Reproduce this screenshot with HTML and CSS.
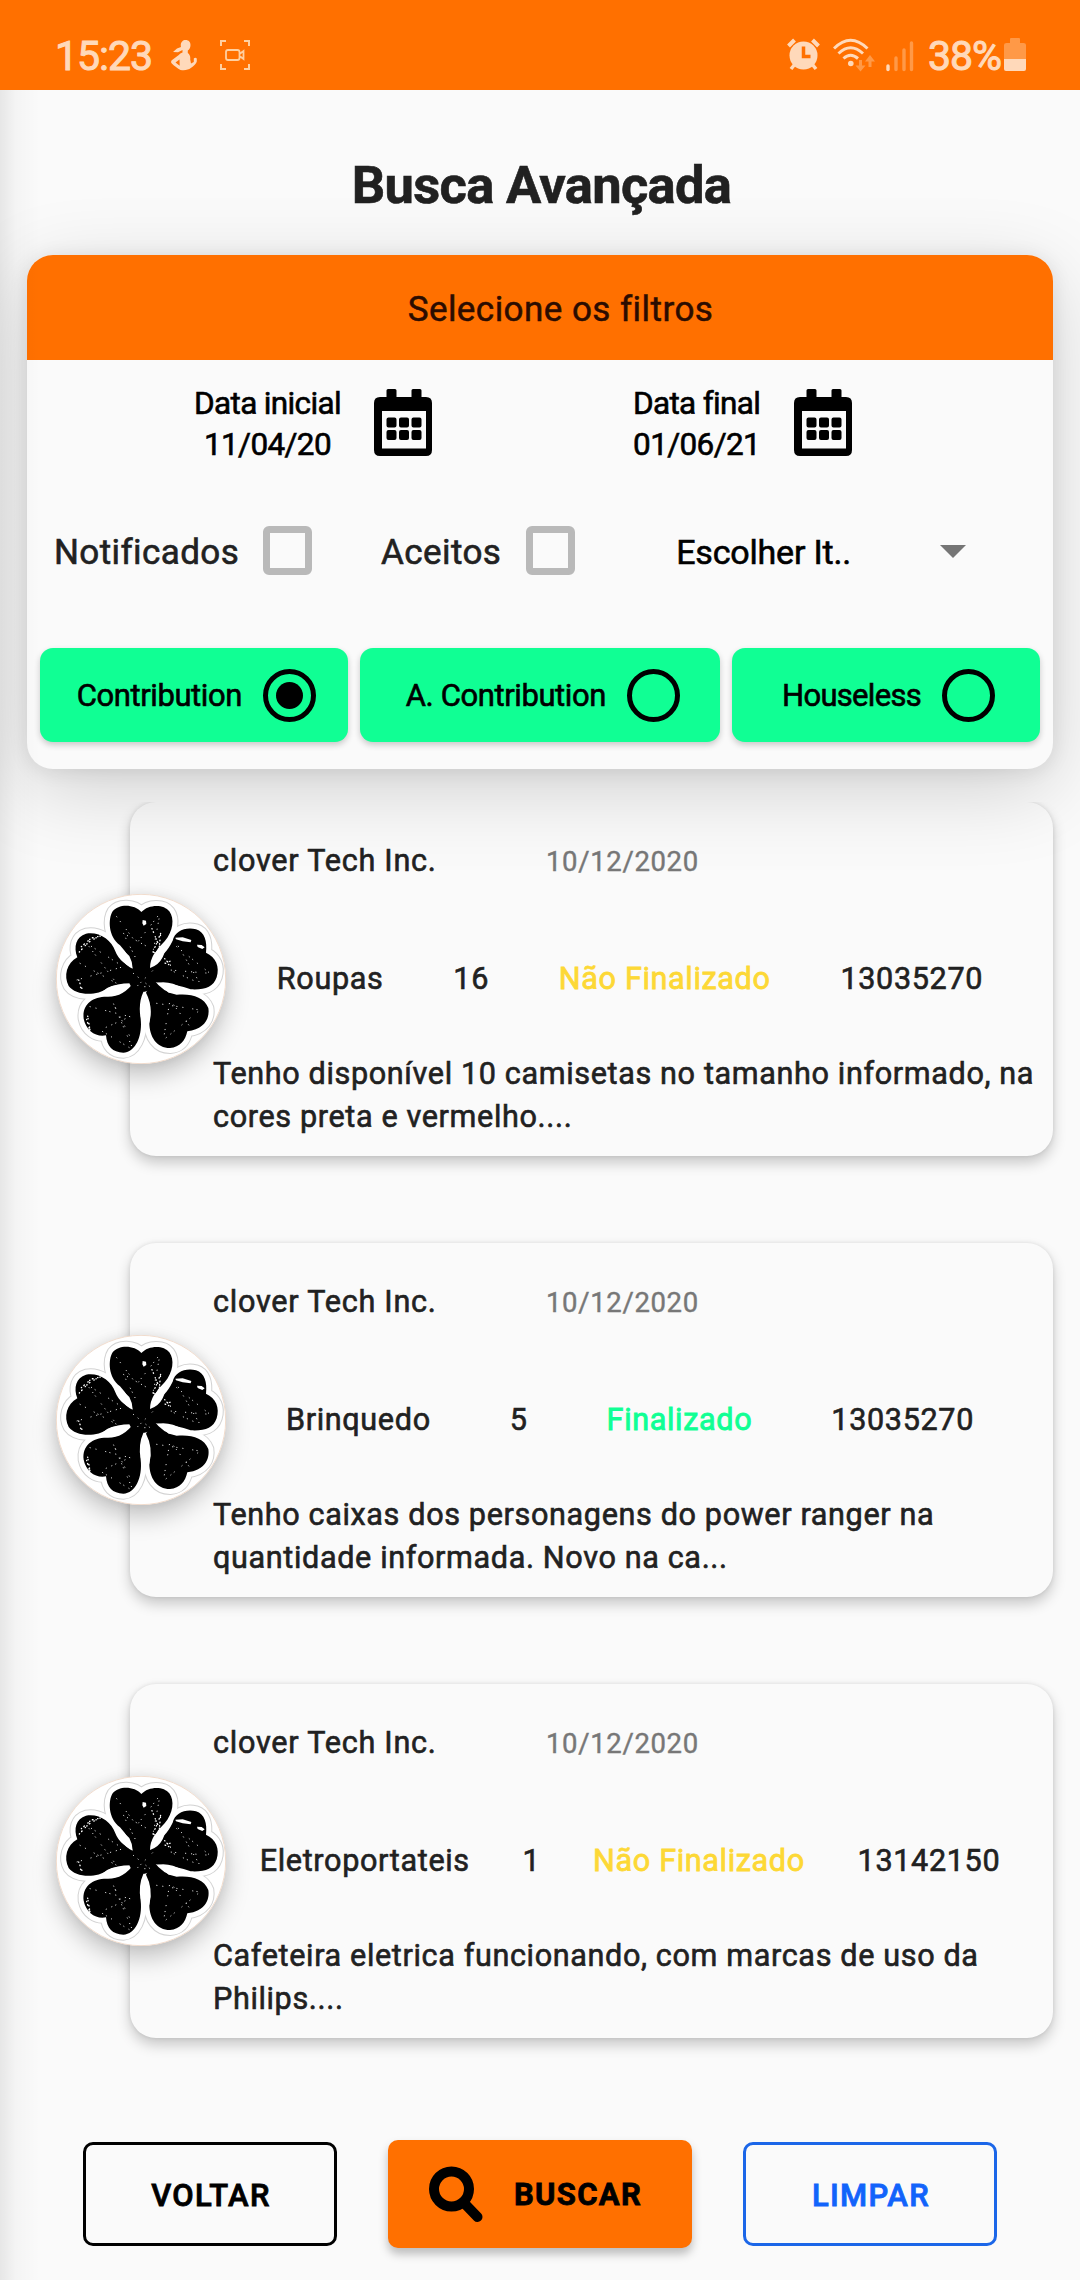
FILE: index.html
```
<!DOCTYPE html>
<html lang="pt-BR">
<head>
<meta charset="utf-8">
<title>Busca Avançada</title>
<link rel="stylesheet" href="styles.css">
</head>
<body>
<svg class="defs" aria-hidden="true">
  <defs>
    <g id="petals">
      <path d="M278 300Q274 262 240 226C204 200 204 146 218 124C236 100 284 102 304 126C326 102 372 102 388 124C404 146 400 184 374 214Q334 250 330 300Z"/>
      <path d="M324 292Q344 266 374 248Q386 236 398 212C404 184 436 170 468 178C494 186 502 214 498 248C528 262 540 290 530 322C520 352 494 360 452 358Q410 342 340 336Z"/>
      <path d="M340 328Q372 370 410 374C454 370 492 380 505 414C510 444 494 478 442 484C436 512 420 532 390 534C350 534 328 500 328 458Q340 410 318 368Z"/>
      <path d="M310 366Q294 400 302 446C308 500 286 546 250 548C218 548 200 528 198 496C168 502 138 482 131 446C126 404 156 380 200 380Q250 382 282 336Z"/>
      <path d="M284 340Q232 338 204 354C168 380 106 376 86 348C70 318 80 280 112 262C100 230 108 200 138 191C176 184 214 208 226 244Q240 282 296 302Z"/>
      <circle cx="306" cy="326" r="40"/>
    </g>
    <symbol id="clover" viewBox="48 72 510 510">
      <circle cx="303" cy="327" r="254" fill="#fff" stroke="#f1dccd" stroke-width="3"/>
      <use href="#petals" fill="#d2d2d2" stroke="#d2d2d2" stroke-width="36" stroke-linejoin="round"/>
      <use href="#petals" fill="#fff" stroke="#fff" stroke-width="30" stroke-linejoin="round"/>
      <use href="#petals" fill="#000"/>
      <g fill="#fff">
        <path d="M222 216Q252 242 268 258Q278 276 278 296Q254 286 240 258ZM386 218Q352 238 342 252Q330 272 330 294Q356 286 368 262ZM190 362Q214 340 268 344Q246 364 232 374Q206 382 190 362ZM354 338Q392 332 428 356Q424 370 386 368ZM315 370Q304 400 302 438L314 492L328 458Q338 404 315 370Z"/>
        <path d="M406 203l22-1 26 8-2 7-24-3-20-6zM471 224l14 1 9 7-7 5-14-6zM308 150l10 2 1 10-8 5-4-7z"/>
      </g>
      <g fill="none" stroke="#fff" stroke-linecap="round">
        <path stroke-width="4" stroke-dasharray="1 9 2 14 1 6" d="M336 176l22 54 4-40-24 58 22-4M118 246l26-28 30-18M124 230l30-26 28-6M374 266l18 20-20-8 26-6M140 448l12 44-10-60M116 330l10 26-8-8"/>
        <path stroke-width="2.600" stroke-dasharray="1 17 1 29 1 12" d="M230 140l60 80 70-90-20 110-90-50 40 80M120 280l110 60-90-120 110 70-140 40M410 230l100 80-120-10 90 40-70-120M350 400l130 20-110 90 20-120 60 80M150 410l120 30-90 40 100 60-60-140 50 100M280 310l50 40-40 0 50-50"/>
      </g>
    </symbol>
    <symbol id="calendar" viewBox="0 0 58 67">
      <path fill-rule="evenodd" d="M12.5 8V1.5q0-1.5 1.5-1.5h7q1.500 0 1.500 1.500V8h15V1.500q0-1.500 1.500-1.500h7q1.500 0 1.500 1.500V8H52q6 0 6 6v47q0 6-6 6H6q-6 0-6-6V14q0-6 6-6zM8 22v37.500h44V22z"/>
      <path d="M14.500 28.500h6q2 0 2 2v6q0 2-2 2h-6q-2 0-2-2v-6q0-2 2-2zm12.500 0h6q2 0 2 2v6q0 2-2 2h-6q-2 0-2-2v-6q0-2 2-2zm12.500 0h6q2 0 2 2v6q0 2-2 2h-6q-2 0-2-2v-6q0-2 2-2zm-25 12.500h6q2 0 2 2v6q0 2-2 2h-6q-2 0-2-2v-6q0-2 2-2zm12.500 0h6q2 0 2 2v6q0 2-2 2h-6q-2 0-2-2v-6q0-2 2-2zm12.500 0h6q2 0 2 2v6q0 2-2 2h-6q-2 0-2-2v-6q0-2 2-2z"/>
    </symbol>
  </defs>
</svg>

<header class="status">
  <span class="status-text clock">15:23</span>
  <svg class="i-person" width="27" height="31" viewBox="0 0 27 31" fill="#ffd9ba"><path d="M14.500 0c3.400 0 5 2.300 5 5 0 2.800-1.300 4.600-2.700 5.600v2.400c2 1.500 2.800 3.700 2.400 6.200l.8 4.300 2.800-1.600V18.600q1.500-1.500 3 0v3c-.3 2-3 4.400-6 6.500C17.500 30 14 30.500 9.500 30 6 28 3 26 .8 23.600c-1.200-1.500-.8-2.600.3-3.500l6.700-5c1-1.300 2-2.200 3.700-2.700V10L7 12.200l-5-.3L6 8.500 10 7C9 2.800 11.500 0 14.500 0zM8.500 19.500l-4 3 4.200 3.200z"/></svg>
  <svg class="i-capture" width="30" height="30" viewBox="0 0 30 30" fill="none" stroke="#ffd0a0" stroke-width="2"><path d="M1 6V1h5M24 1h5v5M29 24v5h-5M6 29H1v-5"/><path d="M8 10h9.500q2 0 2 2v6q0 2-2 2H8q-2 0-2-2v-6q0-2 2-2zM19.500 14l4-3v8l-4-3z" stroke-width="1.800"/></svg>
  <svg class="i-alarm" width="33" height="33" viewBox="0 0 33 33"><path d="M1.500 8L7.500 2M25.500 2l6 6" stroke="#ffd9ba" stroke-width="4"/><path d="M8 26l-4 5M25 26l4 5" stroke="#ffd9ba" stroke-width="3.500"/><circle cx="16.500" cy="17.500" r="14" fill="#ffd9ba"/><path d="M16.500 8.500v10h7" fill="none" stroke="#ff7000" stroke-width="3.500"/></svg>
  <svg class="i-wifi" width="43" height="34" viewBox="0 0 43 34" fill="none" stroke="#ffd9ba" stroke-width="3"><path d="M1 10.500Q17.500-6 34.500 10.500M5.500 15.500Q17.500 4 30 15.500M10.500 20.500Q17.500 14 25 20.500"/><circle cx="17.800" cy="25.500" r="2.800" fill="#ffd9ba" stroke="none"/><path d="M27.500 22v8M37 29V21" stroke="#ff9947"/><path d="M22.500 27.500h10l-5 6zM32 23.500h10l-5-6.500z" fill="#ff9947" stroke="none"/></svg>
  <svg class="i-signal" width="28" height="32" viewBox="0 0 28 32" stroke-width="3.400" stroke-linecap="round" stroke="#ff9947"><path stroke="#ffd9ba" d="M2 26v3.500"/><path d="M10 18v11.500M18 10v19.500M25.500 3v26.500"/></svg>
  <span class="status-text percent">38%</span>
  <svg class="i-battery" width="22" height="34" viewBox="0 0 22 34"><path fill="#ff9947" d="M6 1q0-1 1-1h8q1 0 1 1v4h3.500Q22 5 22 7v14H0V7q0-2 2.500-2H6z"/><path fill="#ffd9ba" d="M0 21h22v10q0 2-2 2H2q-2 0-2-2z"/></svg>
</header>

<main class="screen">
  <h1 class="title">Busca Avançada</h1>

  <section class="filters">
    <h2 class="filters-head">Selecione os filtros</h2>
    <div class="dates">
      <div class="date date-start"><span>Data inicial<br>11/04/20</span><svg width="58" height="67"><use href="#calendar"/></svg></div>
      <div class="date date-end"><span>Data final<br>01/06/21</span><svg width="58" height="67"><use href="#calendar"/></svg></div>
    </div>
    <div class="options">
      <label class="check check-notified">Notificados<i class="box"></i></label>
      <label class="check check-accepted">Aceitos<i class="box"></i></label>
      <div class="select">Escolher It..<i class="caret"></i></div>
    </div>
    <div class="kinds">
      <button class="kind kind-side"><span>Contribution</span><i class="radio radio-on"></i></button>
      <button class="kind kind-mid"><span>A. Contribution</span><i class="radio"></i></button>
      <button class="kind kind-last"><span>Houseless</span><i class="radio"></i></button>
    </div>
  </section>

  <section class="results">
    <article class="item">
      <div class="avatar"><svg viewBox="0 0 170 170"><use href="#clover"/></svg></div>
      <div class="card">
        <div class="top"><span class="name">clover Tech Inc.</span><time class="when">10/12/2020</time></div>
        <div class="facts"><span>Roupas</span><span>16</span><span class="pending">Não Finalizado</span><span>13035270</span></div>
        <p class="desc">Tenho disponível 10 camisetas no tamanho informado, na<br>cores preta e vermelho....</p>
      </div>
    </article>
    <article class="item">
      <div class="avatar"><svg viewBox="0 0 170 170"><use href="#clover"/></svg></div>
      <div class="card">
        <div class="top"><span class="name">clover Tech Inc.</span><time class="when">10/12/2020</time></div>
        <div class="facts"><span>Brinquedo</span><span>5</span><span class="done">Finalizado</span><span>13035270</span></div>
        <p class="desc">Tenho caixas dos personagens do power ranger na<br>quantidade informada. Novo na ca...</p>
      </div>
    </article>
    <article class="item">
      <div class="avatar"><svg viewBox="0 0 170 170"><use href="#clover"/></svg></div>
      <div class="card">
        <div class="top"><span class="name">clover Tech Inc.</span><time class="when">10/12/2020</time></div>
        <div class="facts"><span>Eletroportateis</span><span>1</span><span class="pending">Não Finalizado</span><span>13142150</span></div>
        <p class="desc">Cafeteira eletrica funcionando, com marcas de uso da<br>Philips....</p>
      </div>
    </article>
  </section>

  <nav class="actions">
    <button class="btn btn-back">VOLTAR</button>
    <button class="btn btn-search"><svg width="54" height="57" viewBox="0 0 54 57" fill="none" stroke="#000"><circle cx="22.500" cy="23" r="17.500" stroke-width="10"/><path d="M36 38l12.500 13" stroke-width="10" stroke-linecap="round"/></svg>BUSCAR</button>
    <button class="btn btn-clear">LIMPAR</button>
  </nav>
</main>
</body>
</html>
```
FILE: styles.css
```
* { box-sizing: border-box; }

body {
  margin: 0;
  width: 1080px;
  height: 2280px;
  overflow: hidden;
  background: #fafafa;
  color: #212121;
  font-family: Roboto, sans-serif;
  -webkit-text-stroke: 0.6px currentColor;
}

h1, h2, p { margin: 0; font-weight: 400; }
i { display: block; flex: none; }
svg { display: block; flex: none; }
button { padding: 0; border: 0; font: inherit; letter-spacing: inherit; color: #000; background: none; -webkit-text-stroke: inherit; }
.defs { position: absolute; width: 0; height: 0; }

/* Status bar */
.status {
  display: flex;
  align-items: flex-start;
  height: 90px;
  padding: 38px 54px 0 54px;
  background: #ff7000;
  color: #ffd9ba;
}
.status-text { font-size: 41px; line-height: 36px; letter-spacing: -1px; -webkit-text-stroke: 1px #ffd9ba; }
.clock { width: 116px; margin-left: 1px; }
.i-person { margin-top: 2px; }
.i-capture { margin: 2px 0 0 22px; }
.i-alarm { margin-left: auto; }
.i-wifi { margin-left: 13px; }
.i-signal { margin: 2px 0 0 10px; }
.percent { width: 76px; margin-left: 14px; }

/* Screen */
.screen { position: relative; height: 2190px; }
.screen::before {
  content: "";
  position: absolute;
  inset: 0 auto 0 0;
  width: 40px;
  z-index: 3;
  background: linear-gradient(90deg, rgba(0,0,0,.08), rgba(0,0,0,.025) 40%, transparent);
  pointer-events: none;
}
.title {
  height: 165px;
  padding: 65px 0 0 3px;
  text-align: center;
  font-size: 52.5px;
  font-weight: 700;
  line-height: 60px;
  letter-spacing: -0.7px;
}

/* Filter panel */
.filters {
  position: relative;
  z-index: 2;
  height: 514px;
  margin: 0 27px;
  border-radius: 26px;
  background: #fafafa;
  box-shadow: 0 20px 80px rgba(0,0,0,.17), 0 2px 20px rgba(0,0,0,.09);
}
.filters-head {
  height: 105px;
  padding-left: 41px;
  border-radius: 26px 26px 0 0;
  background: #ff7000;
  color: #2b0c00;
  -webkit-text-stroke: 0.5px #2b0c00;
  text-align: center;
  font-size: 35px;
  line-height: 109px;
  letter-spacing: 0.45px;
}
.dates { display: flex; height: 137px; padding: 23px 0 0 167px; }
.date {
  display: flex;
  color: #000;
  font-size: 31.5px;
  line-height: 41px;
  letter-spacing: -0.65px;
  text-align: center;
}
.date svg { margin: 6px 0 0 33px; }
.date-end { margin-left: 201px; }
.date-end svg { margin-left: 34px; }
.options { display: flex; align-items: center; height: 108px; padding-left: 27px; font-size: 35px; line-height: 44px; letter-spacing: 0.4px; }
.check { display: flex; align-items: center; height: 49px; padding-top: 4px; }
.box { width: 49px; height: 49px; border: 7px solid #b9b9b9; border-radius: 6px; margin-top: -6px; }
.check-notified .box { margin-left: 24px; }
.check-accepted { margin-left: 69px; }
.check-accepted .box { margin-left: 25px; }
.select { display: flex; align-items: center; margin-left: 101px; padding-top: 1px; color: #000; font-size: 34px; letter-spacing: -0.2px; }
.caret { margin-left: 89px; border: 13px solid transparent; border-top-color: #757575; border-bottom: 0; }
.kinds { display: flex; gap: 12px; padding: 43px 13px 0; }
.kind {
  display: flex;
  align-items: center;
  justify-content: flex-end;
  height: 94px;
  border-radius: 13px;
  background: #10ff94;
  font-size: 31px;
  line-height: 38px;
  letter-spacing: -0.4px;
  box-shadow: 0 3px 6px rgba(0,0,0,.2);
}
.kind span { padding-top: 2px; }
.kind-side { width: 308px; padding-right: 32px; }
.kind-mid { width: 360px; padding-right: 40px; }
.kind-last { width: 308px; padding-right: 45px; letter-spacing: -0.7px; }
.radio { display: grid; place-items: center; width: 53px; height: 53px; margin-left: 21px; border: 5px solid #000; border-radius: 50%; }
.radio-on::after { content: ""; width: 27px; height: 27px; border-radius: 50%; background: #000; }

/* Results */
.results { position: relative; height: 1309px; margin-top: 33px; overflow: hidden; }
.item { display: flex; align-items: center; height: 354px; margin-bottom: 87px; padding: 0 27px 0 56px; }
.avatar {
  position: relative;
  z-index: 1;
  flex: none;
  width: 170px;
  height: 170px;
  margin-right: -96px;
  border-radius: 50%;
  box-shadow: 0 12px 24px rgba(0,0,0,.22), 0 0 12px rgba(0,0,0,.08);
}
.card {
  flex: 1;
  height: 354px;
  padding: 37px 0 0 83px;
  border-radius: 26px;
  background: #fafafa;
  font-size: 30.6px;
  line-height: 43px;
  letter-spacing: 0.64px;
  white-space: nowrap;
  box-shadow: 0 7px 14px rgba(0,0,0,.2), 0 0 4px rgba(0,0,0,.1);
}
.top { display: flex; align-items: baseline; height: 43px; }
.name { width: 333px; letter-spacing: 0.75px; }
.when { color: #777; font-size: 27.5px; letter-spacing: 0.65px; -webkit-text-stroke: 0.4px #777; }
.facts { display: flex; justify-content: space-evenly; margin: 75px 0 0 -6px; }
.pending { color: #fdd835; -webkit-text-stroke: 0.8px #fdd835; }
.done { color: #10ff94; -webkit-text-stroke: 0.9px #10ff94; }
.desc { margin-top: 52px; letter-spacing: 0.63px; }

/* Actions */
.actions { display: flex; justify-content: space-between; align-items: center; height: 108px; padding: 0 83px; margin-top: 29px; }
.btn { width: 254px; height: 104px; border-radius: 10px; font-size: 31px; font-weight: 500; letter-spacing: 1.3px; -webkit-text-stroke: 0.8px; }
.btn-back { padding: 2px 0 0 2px; border: 3px solid #000; }
.btn-clear { padding: 2px 0 0 2px; border: 3px solid #1b66e8; color: #1263fb; }
.btn-search {
  display: flex;
  align-items: center;
  gap: 31px;
  width: 304px;
  height: 108px;
  padding: 1px 0 0 41px;
  background: #ff7000;
  font-weight: 700;
  box-shadow: 0 6px 10px rgba(0,0,0,.25);
}
```
